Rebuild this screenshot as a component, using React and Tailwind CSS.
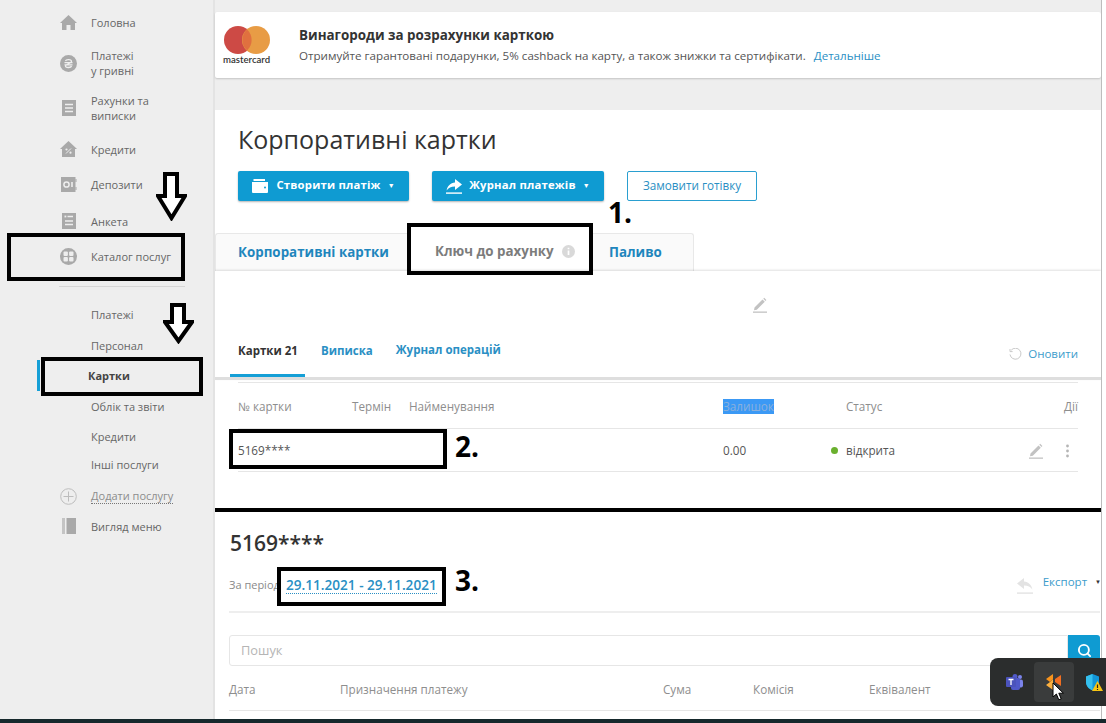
import { Search } from "lucide-react";

const font = { fontFamily: '"Open Sans", "Noto Sans", sans-serif' };

function HomeIcon() {
  return (
    <svg width="17" height="17" viewBox="0 0 17 17" fill="#a9a9a9">
      <path d="M8.5 1 L17 9 H15 V16 H10.5 V11 H6.5 V16 H2 V9 H0 Z" />
    </svg>
  );
}
function HryvniaIcon() {
  return (
    <svg width="17" height="17" viewBox="0 0 17 17">
      <circle cx="8.5" cy="8.5" r="8.5" fill="#a9a9a9" />
      <path d="M5.5 6 C6 4 11.5 4 11.5 6.5 C11.5 9 5.5 8.5 5.5 11 C5.5 13 11 13 11.5 11 M4.5 7.6 H12.5 M4.5 9.8 H12.5" stroke="#eee" strokeWidth="1.3" fill="none" />
    </svg>
  );
}
function ListIcon() {
  return (
    <svg width="14" height="16" viewBox="0 0 14 16">
      <rect width="14" height="16" fill="#a9a9a9" />
      <path d="M3 4.5 H11 M3 8 H11 M3 11.5 H11" stroke="#eee" strokeWidth="1.5" />
    </svg>
  );
}
function CreditIcon() {
  return (
    <svg width="17" height="16" viewBox="0 0 17 16">
      <path d="M8.5 0 L17 8 H15 V16 H2 V8 H0 Z" fill="#a9a9a9" />
      <path d="M6 12.5 L11 7.5" stroke="#eee" strokeWidth="1" />
      <circle cx="6.5" cy="8.5" r="1.1" fill="#eee" />
      <circle cx="10.5" cy="11.7" r="1.1" fill="#eee" />
    </svg>
  );
}
function DepositIcon() {
  return (
    <svg width="16" height="15" viewBox="0 0 16 15">
      <rect width="14.5" height="15" fill="#a9a9a9" />
      <circle cx="5.5" cy="7.5" r="2.6" fill="none" stroke="#eee" strokeWidth="1.5" />
      <path d="M11 5 V10" stroke="#eee" strokeWidth="1.6" />
      <path d="M15 2 V5 M15 10 V13" stroke="#a9a9a9" strokeWidth="1" />
    </svg>
  );
}
function FormIcon() {
  return (
    <svg width="14" height="16" viewBox="0 0 14 16">
      <rect width="14" height="16" fill="#a9a9a9" />
      <path d="M5.5 3.5 H11 M3 8 H11 M3 11.5 H11" stroke="#eee" strokeWidth="1.5" />
      <rect x="2.5" y="2.6" width="1.8" height="1.8" fill="#eee" />
    </svg>
  );
}
function CatalogIcon() {
  return (
    <svg width="17" height="17" viewBox="0 0 17 17">
      <circle cx="8.5" cy="8.5" r="8.5" fill="#a9a9a9" />
      <rect x="3.5" y="3.5" width="4.4" height="4.4" rx="1" fill="#eee" />
      <rect x="9.1" y="3.5" width="4.4" height="4.4" rx="1" fill="#eee" />
      <rect x="3.5" y="9.1" width="4.4" height="4.4" rx="1" fill="#eee" />
      <rect x="9.1" y="9.1" width="4.4" height="4.4" rx="1" fill="#eee" />
    </svg>
  );
}
function PlusIcon() {
  return (
    <svg width="17" height="17" viewBox="0 0 17 17" fill="none" stroke="#bdbdbd">
      <circle cx="8.5" cy="8.5" r="7.8" />
      <path d="M8.5 3.5 V13.5 M3.5 8.5 H13.5" />
    </svg>
  );
}
function ViewIcon() {
  return (
    <svg width="14" height="16" viewBox="0 0 14 16" fill="#a9a9a9">
      <rect width="3" height="16" fill="#c4c4c4" />
      <rect x="4.5" width="9.5" height="16" />
    </svg>
  );
}
function Pencil({ color = "#c2c2c2" }) {
  return (
    <svg width="14" height="16" viewBox="0 0 14 16" fill={color}>
      <path d="M1.5 10.5 L9.5 2.5 L11.8 4.8 L3.8 12.8 L1 13.2 Z M10.3 1.7 L11.2 0.8 L13.4 3 L12.5 3.9 Z" />
      <rect y="14.5" width="14" height="1.3" />
    </svg>
  );
}

const topItems = [
  { icon: <HomeIcon />, lines: ["Головна"], cls: "h-[30px] mt-[7px]" },
  { icon: <HryvniaIcon />, lines: ["Платежі", "у гривні"], cls: "h-[40px] mt-[6px]" },
  { icon: <ListIcon />, lines: ["Рахунки та", "виписки"], cls: "h-[40px] mt-[5px]" },
  { icon: <CreditIcon />, lines: ["Кредити"], cls: "h-[30px] mt-[6px]" },
  { icon: <DepositIcon />, lines: ["Депозити"], cls: "h-[30px] mt-[5px]" },
  { icon: <FormIcon />, lines: ["Анкета"], cls: "h-[30px] mt-[7px]" },
  { icon: <CatalogIcon />, lines: ["Каталог послуг"], cls: "h-[30px] mt-[5px]" },
];

const subItems = [
  { label: "Платежі", cls: "h-[30px] mt-[12px]" },
  { label: "Персонал", cls: "h-[30px] mt-[1px]" },
  { label: "Картки", cls: "h-[30px] mt-0", active: true },
  { label: "Облік та звіти", cls: "h-[30px] mt-[1px]" },
  { label: "Кредити", cls: "h-[30px] mt-0" },
  { label: "Інші послуги", cls: "h-[26px] mt-0" },
];

function Sidebar() {
  return (
    <aside className="w-[215px] shrink-0 border-r-2 border-[#e3e3e3] text-[11px] leading-[15px] text-[#666]">
      <nav>
        {topItems.map((item) => (
          <div key={item.lines[0]} className={`flex items-center pl-[60px] ${item.cls}`}>
            <span className="w-[31px] flex justify-center pr-[14px]">{item.icon}</span>
            <span>
              {item.lines.map((l) => (
                <span key={l} className="block">{l}</span>
              ))}
            </span>
          </div>
        ))}
        <div className="ml-[59px] mr-[28px] mt-[15px] border-t border-[#d6d6d6]" />
        {subItems.map((item) => (
          <div
            key={item.label}
            className={`flex items-center ${item.cls} ${item.active ? "pl-[88px] font-bold text-[#444]" : "pl-[91px]"}`}
          >
            {item.label}
          </div>
        ))}
        <div className="flex items-center pl-[60px] h-[30px] mt-[4px]">
          <span className="w-[31px] flex justify-start"><PlusIcon /></span>
          <span className="text-[#8c8c8c] border-b border-dotted border-[#777]">Додати послугу</span>
        </div>
        <div className="flex items-center pl-[60px] h-[30px] mt-0">
          <span className="w-[31px] flex justify-start pl-[2px]"><ViewIcon /></span>
          <span>Вигляд меню</span>
        </div>
      </nav>
    </aside>
  );
}

function Banner() {
  return (
    <div className="mt-3 h-[66px] flex items-center bg-white rounded-[2px] shadow-[0_1px_2px_rgba(0,0,0,0.18)]">
      <div className="w-[84px] pl-[8px] mt-[2px] flex flex-col items-start">
        <svg width="48" height="28" viewBox="0 0 48 28">
          <circle cx="15" cy="14" r="14" fill="#cd4a45" />
          <circle cx="33" cy="14" r="14" fill="#e89c45" />
          <path d="M24 3.6 A14 14 0 0 1 24 24.4 A14 14 0 0 1 24 3.6 Z" fill="#e0703f" />
        </svg>
        <span className="text-[9.6px] leading-[12px] font-semibold text-[#333]" style={{ fontFamily: "Lato, sans-serif" }}>mastercard</span>
      </div>
      <div>
        <p className="text-[13.4px] leading-[18px] font-bold text-[#333]">Винагороди за розрахунки карткою</p>
        <p className="text-[11.6px] leading-[16px] mt-[4px] text-[#555]">
          Отримуйте гарантовані подарунки, 5% cashback на карту, а також знижки та сертифікати.
          <span className="ml-[8px] text-[#2a8fc4]">Детальніше</span>
        </p>
      </div>
    </div>
  );
}

function Toolbar() {
  return (
    <div className="flex pl-[23px] mt-[16px] text-[11.3px] font-bold">
      <button className="h-[30px] w-[171px] flex items-center justify-center rounded-[2px] bg-[#0f9bd2] text-white shadow-[0_1px_2px_rgba(0,0,0,0.3)]">
        <svg width="16" height="14" viewBox="0 0 16 14" fill="#fff">
          <path d="M1.5 0 H13 V2 H1.5 Z M0 3 H16 V13 A1 1 0 0 1 15 14 H1 A1 1 0 0 1 0 13 Z" />
          <circle cx="13" cy="8.5" r="1" fill="#0f9bd2" />
        </svg>
        <span className="ml-[8px] pb-[1px] tracking-[0.2px]">Створити платіж</span>
        <span className="ml-[7px] text-[7px]">▼</span>
      </button>
      <button className="h-[30px] w-[172px] ml-[23px] flex items-center justify-center rounded-[2px] bg-[#0f9bd2] text-white shadow-[0_1px_2px_rgba(0,0,0,0.3)]">
        <svg width="16" height="15" viewBox="0 0 16 15" fill="#fff">
          <path d="M9 0 L16 5.5 L9 11 V7.6 C5 7.6 2.5 9 0.6 11.5 C1.5 6.6 4.5 4 9 3.4 Z" />
          <rect y="13.4" width="16" height="1.4" />
        </svg>
        <span className="ml-[7px] pb-[1px] tracking-[0.2px]">Журнал платежів</span>
        <span className="ml-[7px] text-[7px]">▼</span>
      </button>
      <button className="h-[30px] w-[130px] ml-[23px] rounded-[2px] border border-[#2a9fd0] bg-white text-[11.7px] text-[#2a8fc4] font-normal">
        Замовити готівку
      </button>
    </div>
  );
}

function Tabs() {
  return (
    <div className="flex h-[38px] mt-[32px] text-[13.35px] font-bold">
      <div className="w-[193px] pl-[22px] pb-[1px] flex items-center bg-[#fafafa] border-t border-l border-[#e8e8e8] rounded-tl-[3px] text-[#1f86bd]">
        Корпоративні картки
      </div>
      <div className="w-[184px] pl-[27px] pb-[2px] flex items-center bg-white text-[#7c7c7c]">
        Ключ до рахунку
        <svg className="ml-[8px]" width="13" height="13" viewBox="0 0 13 13">
          <circle cx="6.5" cy="6.5" r="6.5" fill="#d9d9d9" />
          <path d="M6.5 5.6 V10 M6.5 2.8 V4.2" stroke="#fff" strokeWidth="1.7" />
        </svg>
      </div>
      <div className="w-[102px] pl-[17px] pb-[1px] flex items-center bg-[#fafafa] border-t border-r border-[#e8e8e8] rounded-tr-[3px] text-[#1f86bd]">
        Паливо
      </div>
    </div>
  );
}

function SubTabs() {
  return (
    <div className="relative shadow-[0_-1px_2px_rgba(0,0,0,0.12)] bg-white">
      <div className="flex justify-center h-[52px] pt-[26px] pl-[203px]">
        <Pencil />
      </div>
      <div className="flex items-start h-[57px] border-b-[3px] border-[#dedede]">
        <div className="ml-[15px] w-[75px] h-[54px] pl-[8px] pt-[19px] border-b-[3px] border-[#159fd6] text-[11.5px] leading-[18px] font-bold text-[#333]">
          Картки 21
        </div>
        <div className="ml-[16px] pt-[19px] text-[11.5px] leading-[18px] font-bold text-[#2a8fc4]">Виписка</div>
        <div className="ml-[23px] pt-[18px] text-[11.5px] leading-[18px] font-bold text-[#2a8fc4]">Журнал операцій</div>
        <div className="ml-auto mr-[23px] pt-[22px] flex items-center text-[11.5px] leading-[18px] text-[#3c9ccb]">
          <svg className="mr-[6px]" width="13" height="13" viewBox="0 0 13 13" fill="none" stroke="#c9c9c9" strokeWidth="1">
            <path d="M2.2 2.2 A5.5 5.5 0 1 1 1 6.5" />
            <path d="M1 1 V3.6 H3.6" />
          </svg>
          Оновити
        </div>
      </div>
    </div>
  );
}

function CardsTable() {
  return (
    <div className="mx-[23px] mt-[2px] border-t border-[#e6e6e6] text-[11.7px]">
      <div className="grid grid-cols-[114px_57px_314px_123px_1fr_30px] items-center h-[46px] pt-[2px] border-b border-[#e6e6e6] text-[#8e8e8e]">
        <span>№ картки</span>
        <span>Термін</span>
        <span>Найменування</span>
        <span><span className="bg-[#3b99f5] text-[#8ab0dc] leading-[15px] inline-block">Залишок</span></span>
        <span>Статус</span>
        <span className="text-right">Дії</span>
      </div>
      <div className="grid grid-cols-[485px_108px_1fr_49px] items-center h-[43px] pt-[1px] border-b border-[#e6e6e6] text-[#555]">
        <span>5169****</span>
        <span>0.00</span>
        <span className="flex items-center">
          <span className="w-[7px] h-[7px] rounded-full bg-[#6ab02e] mr-[8px]" />
          відкрита
        </span>
        <span className="flex items-center">
          <Pencil />
          <svg className="ml-[23px]" width="3" height="14" viewBox="0 0 3 14" fill="#b5b5b5">
            <circle cx="1.5" cy="2" r="1.4" />
            <circle cx="1.5" cy="7" r="1.4" />
            <circle cx="1.5" cy="12" r="1.4" />
          </svg>
        </span>
      </div>
    </div>
  );
}

function Statement() {
  return (
    <div className="ml-[14px] mr-[1px] mt-[58px]">
      <h2 className="pl-[1px] text-[21px] leading-[26px] font-semibold text-[#333]">5169****</h2>
      <div className="flex items-center h-[30px] mt-[14px] text-[11px] text-[#8a8a8a]">
        <span className="w-[57px]">За період</span>
        <span className="text-[13.6px] font-semibold text-[#2a8fc4] border-b border-dotted border-[#2a8fc4] leading-[17px]">29.11.2021 - 29.11.2021</span>
        <span className="ml-auto flex items-start mr-[-1px] mt-[-4px]">
          <svg className="mr-[10px] mt-[4px]" width="16" height="17" viewBox="0 0 16 17" fill="#e3e3e3">
            <path d="M7 1 L0 6.5 L7 12 V8.6 C11 8.6 13.5 10 15.4 12.5 C14.5 7.6 11.5 5 7 4.4 Z" />
            <rect y="15.4" width="16" height="1.4" />
          </svg>
          <span className="text-[#3c9ccb] text-[11.5px]">Експорт</span>
          <span className="ml-[8px] mt-[5px] text-[6px] text-[#333]">▼</span>
        </span>
      </div>
      <div className="mt-[11px] border-t-2 border-[#eeeeee]" />
      <div className="mt-[22px] flex h-[31px]">
        <div className="flex-1 flex items-center pl-[11px] text-[12.8px] text-[#b5b5b5] border border-[#e6e6e6] rounded-l-[3px]">Пошук</div>
        <div className="w-[32px] flex items-center justify-center bg-[#0f9bd2] rounded-r-[3px]">
          <Search size={15} color="#fff" strokeWidth={3} />
        </div>
      </div>
      <div className="grid grid-cols-[111px_323px_90px_116px_1fr] items-center h-[45px] pt-[3px] border-b border-[#e6e6e6] text-[11.7px] text-[#8e8e8e]">
        <span>Дата</span>
        <span>Призначення платежу</span>
        <span>Сума</span>
        <span>Комісія</span>
        <span>Еквівалент</span>
      </div>
    </div>
  );
}

// hand-drawn marks the author put on top of the screenshot
function Marks() {
  const box = "absolute border-[4px] border-black";
  return (
    <>
      <div className={`${box} left-[7px] top-[233px] w-[178px] h-[48px]`} />
      <div className={`${box} left-[41px] top-[357px] w-[162px] h-[39px]`} />
      <div className={`${box} left-[407px] top-[223px] w-[186px] h-[52px]`} />
      <div className={`${box} left-[229px] top-[429px] w-[218px] h-[40px]`} />
      <div className={`${box} left-[277px] top-[567px] w-[169px] h-[39px]`} />
      <div className="absolute left-[37px] top-[360px] w-[3px] h-[31px] bg-[#159fd6]" />
      <div className="absolute left-[215px] top-[508px] w-[886px] h-[4px] bg-black" />
      <svg className="absolute left-[156px] top-[172px]" width="31" height="49" viewBox="0 0 31 49" fill="#fff" stroke="#000" strokeWidth="4">
        <path d="M9 2 H21 V24 H29 L15.5 46 L2 24 H9 Z" />
      </svg>
      <svg className="absolute left-[163px] top-[303px]" width="31" height="41" viewBox="0 0 31 41" fill="#fff" stroke="#000" strokeWidth="4">
        <path d="M9 2 H21 V19 H29 L15.5 38 L2 19 H9 Z" />
      </svg>
      <span className="absolute left-[608px] top-[193px] text-[28px] leading-[38px] font-bold text-black">1.</span>
      <span className="absolute left-[455px] top-[427px] text-[28px] leading-[38px] font-bold text-black">2.</span>
      <span className="absolute left-[455px] top-[561px] text-[28px] leading-[38px] font-bold text-black">3.</span>
    </>
  );
}

function TrayPopup() {
  return (
    <div className="absolute left-[990px] top-[658px] w-[130px] h-[48px] rounded-[8px] bg-[#2b2d2d] flex items-center pl-[4px]">
      <div className="w-[40px] flex justify-center">
        <svg width="17" height="16" viewBox="0 0 17 16">
          <circle cx="14" cy="3" r="2" fill="#7b83eb" />
          <rect x="10" y="5.5" width="7" height="8" rx="2" fill="#7b83eb" />
          <circle cx="9" cy="2.5" r="2.5" fill="#5059c9" />
          <rect x="5" y="4" width="9" height="12" rx="2" fill="#5059c9" />
          <rect x="0" y="3" width="10" height="10" rx="1" fill="#4b53bc" />
          <path d="M2.5 5.5 H7.5 M5 5.5 V11" stroke="#fff" strokeWidth="1.3" />
        </svg>
      </div>
      <div className="w-[40px] h-[40px] rounded-[4px] bg-[#3a3c3c] flex items-center justify-center">
        <svg width="16" height="16" viewBox="0 0 16 16">
          <path d="M7 0 L0 5 L4 8 L7 5 Z" fill="#f7941d" />
          <path d="M7 5 V16 L0 11 L4 8 Z" fill="#fbb040" />
          <path d="M9 5 L15 1 V12 L9 8 Z" fill="#f26f21" />
        </svg>
      </div>
      <div className="w-[40px] flex justify-center">
        <svg width="18" height="17" viewBox="0 0 18 17">
          <path d="M7.5 0 L14 2.5 V8 C14 12 11 15 7.5 16.5 C4 15 1 12 1 8 V2.5 Z" fill="#1296d8" />
          <path d="M7.5 0 V16.5 C4 15 1 12 1 8 V2.5 Z" fill="#35c0ee" />
          <path d="M12.5 7 L18 17 H7 Z" fill="#f9c513" />
          <path d="M12.5 10.5 V14 M12.5 15 V16" stroke="#222" strokeWidth="1.2" />
        </svg>
      </div>
    </div>
  );
}

function Cursor() {
  return (
    <svg className="absolute left-[1052px] top-[682px]" width="13" height="19" viewBox="0 0 13 19">
      <path d="M1 1 V15 L4.4 12 L6.8 17.8 L9.2 16.8 L6.8 11.2 H11.4 Z" fill="#fff" stroke="#000" strokeWidth="1" />
    </svg>
  );
}

export default function App() {
  return (
    <div className="relative w-[1106px] h-[723px] overflow-hidden bg-[#eeeeee]" style={font}>
      <div className="flex h-[719px]">
        <Sidebar />
        <main className="w-[886px] shrink-0 flex flex-col">
          <Banner />
          <section className="mt-[32px] flex-1 bg-white overflow-hidden">
            <h1 className="pl-[23px] pt-[13px] text-[25px] leading-[32px] font-medium text-[#333]">Корпоративні картки</h1>
            <Toolbar />
            <Tabs />
            <SubTabs />
            <CardsTable />
            <Statement />
          </section>
        </main>
        <div className="flex-1 bg-white border-l border-[#bdbdbd]" />
      </div>
      <div className="h-[4px] bg-[#16282c]" />
      <Marks />
      <TrayPopup />
      <Cursor />
    </div>
  );
}
